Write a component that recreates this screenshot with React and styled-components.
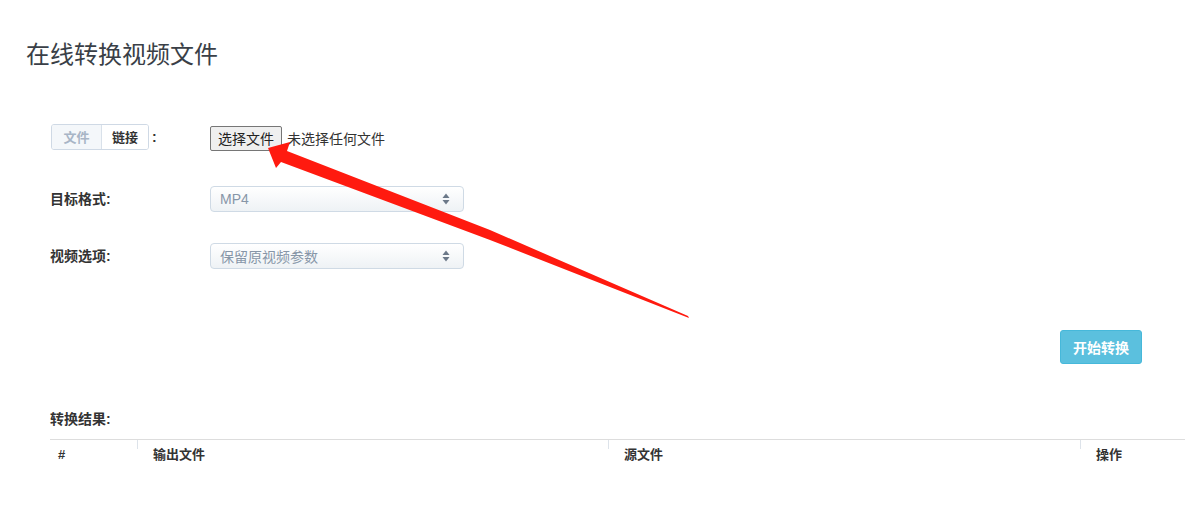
import React from 'react'
import styled, { createGlobalStyle } from 'styled-components'

const GlobalStyle = createGlobalStyle`
  html, body {
    margin: 0;
    padding: 0;
    background: #ffffff;
  }
  body {
    font-family: "Liberation Sans", "Noto Sans CJK SC", sans-serif;
    font-size: 13px;
    color: #333333;
  }
`

const Page = styled.div`
  position: relative;
  width: 1185px;
  height: 514px;
  overflow: hidden;
  padding-left: 26px;
  box-sizing: border-box;
`

const Title = styled.h1`
  margin: 0;
  padding-top: 40px;
  font-size: 24px;
  line-height: 29px;
  font-weight: 400;
  color: #3a3f47;
`

const Form = styled.div`
  padding-left: 24px;
  padding-top: 56px;
`

const Row = styled.div`
  display: flex;
  align-items: center;
  height: 26px;
  margin-bottom: ${p => p.$gap || 0}px;
`

const Label = styled.div`
  width: 160px;
  font-weight: bold;
  font-size: 14px;
  color: #333;
  display: flex;
  align-items: center;
  padding-bottom: 3px;
  box-sizing: border-box;
`

const Tabs = styled.div`
  display: flex;
  height: 26px;
  margin-left: 1px;
  border: 1px solid #cfd9e5;
  border-radius: 3px;
  box-sizing: border-box;
  overflow: hidden;
`

const Tab = styled.div`
  width: ${p => p.$w}px;
  display: flex;
  align-items: center;
  justify-content: center;
  font-weight: bold;
  font-size: 13px;
  background: ${p => (p.$active ? '#f4f7fa' : '#ffffff')};
  color: ${p => (p.$active ? '#a8b5c6' : '#333333')};
  border-right: ${p => (p.$active ? '1px solid #d9e1ea' : 'none')};
`

const Colon = styled.span`
  margin-left: 3px;
  font-weight: bold;
`

const FileButton = styled.div`
  height: 25px;
  width: 72px;
  box-sizing: border-box;
  border: 1px solid #767676;
  border-radius: 2px;
  background: #efefef;
  display: flex;
  align-items: center;
  justify-content: center;
  font-size: 14px;
  color: #222;
`

const FileNote = styled.span`
  margin-left: 5px;
  font-size: 14px;
  color: #333;
`

const Select = styled.div`
  width: 254px;
  height: 26px;
  box-sizing: border-box;
  border: 1px solid #cfdae5;
  border-radius: 4px;
  background: linear-gradient(#ffffff, #eef2f5);
  display: flex;
  align-items: center;
  justify-content: space-between;
  padding: 0 13px 0 9px;
  font-size: 14px;
  color: #8796a8;
`

const ButtonRow = styled.div`
  display: flex;
  justify-content: flex-end;
  padding-right: 43px;
  margin-top: 61px;
`

const StartButton = styled.button`
  width: 82px;
  height: 34px;
  background: #5bc0de;
  border: 1px solid #46b8da;
  border-radius: 3px;
  color: #ffffff;
  font-family: inherit;
  font-weight: bold;
  font-size: 14px;
  padding: 0;
`

const Results = styled.div`
  padding-left: 24px;
  margin-top: 46px;
`

const ResultsLabel = styled.div`
  font-weight: bold;
  font-size: 14px;
  line-height: 18px;
`

const Table = styled.div`
  margin-top: 11px;
  width: 1140px;
  border-top: 1px solid #dddddd;
  display: flex;
`

const HeadCell = styled.div`
  position: relative;
  width: ${p => p.$w}px;
  padding: 6px 0 0 ${p => p.$pad}px;
  box-sizing: border-box;
  height: 30px;
  line-height: 18px;
  font-weight: bold;
  font-size: 13px;
  color: #333;
  border-left: ${p => (p.$sep ? '1px solid #dde3ea' : 'none')};
`

const SepMask = styled.span`
  position: absolute;
  left: -1px;
  top: 9px;
  width: 1px;
  bottom: 0;
  background: #ffffff;
`

const Overlay = styled.svg`
  position: absolute;
  left: 0;
  top: 0;
  pointer-events: none;
`

const SortIcon = () => (
  <svg width="8" height="12" viewBox="0 0 8 12">
    <polygon points="4,0.5 7.5,5 0.5,5" fill="#6b7888" />
    <polygon points="0.5,7 7.5,7 4,11.5" fill="#6b7888" />
  </svg>
)

export default function App() {
  return (
    <Page>
      <GlobalStyle />
      <Title>在线转换视频文件</Title>
      <Form>
        <Row $gap={35}>
          <Label>
            <Tabs>
              <Tab $active $w={49}>文件</Tab>
              <Tab $w={46}>链接</Tab>
            </Tabs>
            <Colon>:</Colon>
          </Label>
          <FileButton>选择文件</FileButton>
          <FileNote>未选择任何文件</FileNote>
        </Row>
        <Row $gap={31}>
          <Label>目标格式:</Label>
          <Select>
            <span>MP4</span>
            <SortIcon />
          </Select>
        </Row>
        <Row>
          <Label>视频选项:</Label>
          <Select>
            <span>保留原视频参数</span>
            <SortIcon />
          </Select>
        </Row>
      </Form>
      <ButtonRow>
        <StartButton>开始转换</StartButton>
      </ButtonRow>
      <Results>
        <ResultsLabel>转换结果:</ResultsLabel>
        <Table>
          <HeadCell $w={87} $pad={8}>#</HeadCell>
          <HeadCell $w={471} $pad={15} $sep><SepMask />输出文件</HeadCell>
          <HeadCell $w={472} $pad={15} $sep><SepMask />源文件</HeadCell>
          <HeadCell $w={110} $pad={15} $sep><SepMask />操作</HeadCell>
        </Table>
      </Results>
      <Overlay width="1185" height="514" viewBox="0 0 1185 514">
        <polygon
          fill="#ff1a0f"
          points="268,148 290,142 287,151 490,230 688,316 689,318 490,240 281,162 276,168"
        />
      </Overlay>
    </Page>
  )
}
